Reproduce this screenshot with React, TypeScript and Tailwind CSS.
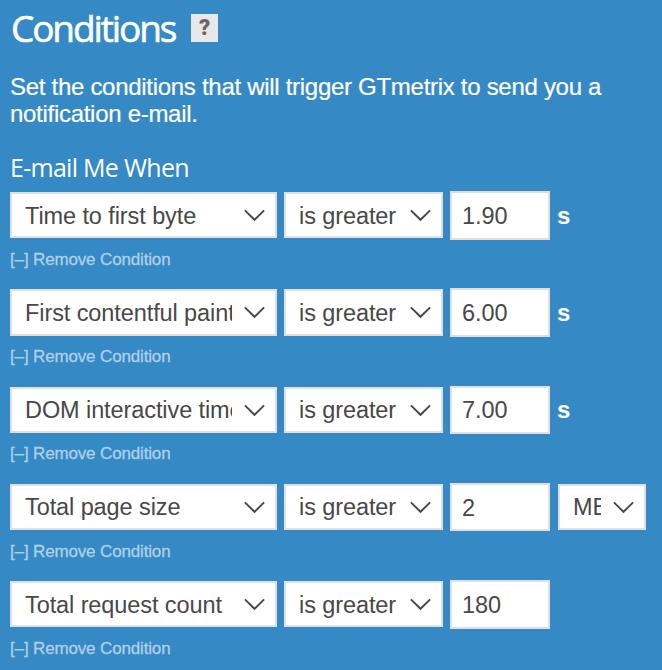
import { clsx } from "clsx"

type Condition = {
    metric: string
    value: string
    suffix?: string
    unit?: string
}

const conditions: Condition[] = [
    { metric: "Time to first byte", value: "1.90", suffix: "s" },
    { metric: "First contentful paint", value: "6.00", suffix: "s" },
    { metric: "DOM interactive time", value: "7.00", suffix: "s" },
    { metric: "Total page size", value: "2", unit: "MB" },
    { metric: "Total request count", value: "180" },
]

function Select({ value, className }: { value: string; className?: string }) {
    return (
        <div className={clsx("relative h-[46.25px] shrink-0", className)}>
            <select
                defaultValue={value}
                className="block h-full w-full appearance-none rounded-none border-2 border-[#e0e0e0] bg-white pt-[2px] pl-[13px] pr-[43px] text-[23.5px] tracking-[-0.09px] text-[#484848] outline-none"
            >
                <option>{value}</option>
            </select>
            <svg
                viewBox="0 0 22 13"
                className="pointer-events-none absolute right-[12px] top-[17px] h-[13px] w-[22px]"
                fill="none"
                stroke="#484848"
                strokeWidth="1.9"
            >
                <path d="M1.9 1.4 L11.5 10.8 L21.1 1.4" />
            </svg>
        </div>
    )
}

function ConditionRow({ metric, value, suffix, unit }: Condition) {
    return (
        <div className="h-[97.25px]">
            <div className="flex h-[48.5px] items-center">
                <Select value={metric} className="w-[267px]" />
                <Select value="is greater" className="ml-[7px] w-[159px]" />
                <input
                    defaultValue={value}
                    className="ml-[7px] h-[48.5px] w-[100px] shrink-0 rounded-none border-2 border-[#e0e0e0] bg-white px-[10px] pt-[2px] text-[23.5px] tracking-[-0.09px] text-[#484848] outline-none"
                />
                {suffix && <span className="ml-[7px] mt-[1px] text-[24px] font-bold leading-none text-white">{suffix}</span>}
                {unit && <Select value={unit} className="ml-2 w-[88px]" />}
            </div>
            <button className="mt-[10.25px] block whitespace-nowrap text-[17px] leading-5 tracking-[-0.15px] text-[#afd0e8] [-webkit-text-stroke:0.3px_#afd0e8]">
                [–] Remove Condition
            </button>
        </div>
    )
}

export default function App() {
    return (
        <main className="h-[670px] w-[662px] overflow-hidden bg-[#3589c5] pl-[10px] font-['Liberation_Sans',Arial,sans-serif]">
            {/* Title */}
            <div className="flex h-[56px] items-center">
                <h1 className="-mt-[2px] w-[181px] whitespace-nowrap pl-px font-['Open_Sans',sans-serif] text-[37px] leading-none tracking-[-2.1px] text-white [-webkit-text-stroke:0.6px_white]">
                    Conditions
                </h1>
                <span className="flex h-7 w-[27px] items-center justify-center bg-[#e8e8e8] font-[Roboto,sans-serif] text-[22px] font-black leading-none text-[#666]">
                    ?
                </span>
            </div>

            <p className="mt-[17px] text-[24px] leading-[27px] tracking-[-0.29px] text-white [-webkit-text-stroke:0.2px_white]">
                Set the conditions that will trigger GTmetrix to send you a
                <br />
                notification e-mail.
            </p>

            <h2 className="mt-[24px] h-[40px] whitespace-nowrap font-['Open_Sans',sans-serif] text-[25px] leading-[32px] tracking-[-0.72px] text-white">
                E-mail Me When
            </h2>

            {/* Alert conditions */}
            {conditions.map((condition) => (
                <ConditionRow key={condition.metric} {...condition} />
            ))}
        </main>
    )
}
